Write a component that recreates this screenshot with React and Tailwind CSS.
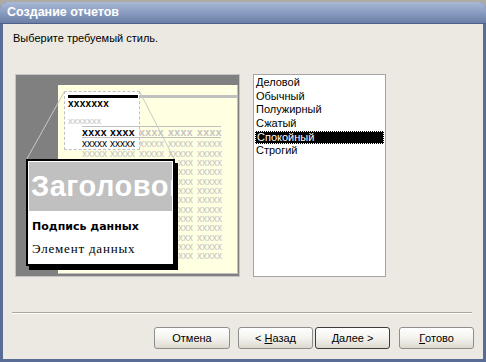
const styles = ['Деловой', 'Обычный', 'Полужирный', 'Сжатый', 'Спокойный', 'Строгий']

const groupX = ['left-[66px]', 'left-[94px]', 'left-[123px]', 'left-[152px]', 'left-[181px]']
const rowTop = [
  'top-[64px]', 'top-[74px]', 'top-[83px]', 'top-[92px]', 'top-[102px]', 'top-[111px]', 'top-[120px]',
  'top-[130px]', 'top-[139px]', 'top-[148px]', 'top-[158px]', 'top-[167px]', 'top-[176px]',
]

function DataRow({ top, index }) {
  // rows from the third on run behind the callout: only what shows to its right is drawn
  if (index >= 2) {
    return (
      <>
        <div className={`absolute ${top} left-[162px] w-[15px] overflow-hidden text-[10px] leading-[9px] text-[#c4c4c4]`}>
          <span className="-ml-[10px] block">xxxxx</span>
        </div>
        <div className={`absolute ${top} left-[181px] text-[10px] leading-[9px] text-[#c4c4c4]`}>xxxxx</div>
      </>
    )
  }
  return groupX.map((g, i) => (
    <div
      key={g}
      className={`absolute ${top} ${g} text-[10px] leading-[9px] ${index === 0 && i < 2 ? 'text-black' : 'text-[#c4c4c4]'}`}
    >
      xxxxx
    </div>
  ))
}

function Preview() {
  return (
    <div className="relative h-[203px] w-[225px] border border-[#c4c4c4] bg-[#808080] font-['Liberation_Sans',sans-serif]">
      {/* page */}
      <div className="absolute left-[42px] top-[10px] h-[189px] w-[180px] border-b border-r border-[#c0c0c0] bg-[#ffffe1]" />

      {/* selected header area */}
      <div className="absolute left-[48px] top-[16px] h-[59px] w-[76px] border border-dashed border-[#c0c0c0] bg-white" />
      <div className="absolute left-[52px] top-[20px] h-[3px] w-[70px] bg-black" />
      <div className="absolute left-[123px] top-[20px] h-[3px] w-[99px] bg-[#c0c0c0]" />
      <div className="absolute left-[52px] top-[24px] text-[10px] font-bold leading-[10px] tracking-[0.3px] text-black">xxxxxxx</div>
      <div className="absolute left-[52px] top-[41px] text-[9.5px] leading-[10px] text-[#c4c4c4]">xxxxxxx</div>

      {/* column header */}
      <div className="absolute left-[66px] top-[51px] h-px w-[139px] bg-[#c0c0c0]" />
      <div className="absolute left-[66px] top-[62px] h-px w-[139px] bg-[#c0c0c0]" />
      {groupX.map((g, i) => (
        <div
          key={g}
          className={`absolute top-[52px] ${g} text-[10.5px] font-bold leading-[10px] tracking-[0.4px] ${i < 2 ? 'text-black' : 'text-[#c4c4c4]'}`}
        >
          xxxx
        </div>
      ))}

      {/* data rows */}
      {rowTop.map((t, r) => (
        <DataRow key={t} top={t} index={r} />
      ))}

      {/* zoom lines */}
      <svg className="absolute left-0 top-0" width="223" height="201">
        <line x1="48.5" y1="16.5" x2="10.5" y2="84.5" stroke="#c8c8c8" strokeWidth="1" />
        <line x1="123.5" y1="16.5" x2="158.5" y2="84.5" stroke="#c8c8c8" strokeWidth="1" />
      </svg>

      {/* callout */}
      <div className="absolute left-[10px] top-[84px] h-[107px] w-[149px] border-2 border-black bg-white p-[1px] shadow-[3px_4px_0_#000]">
        <div className="h-[49px] overflow-hidden whitespace-nowrap bg-[#c0c0c0] pl-[2px] text-[29px] font-bold leading-[49px] tracking-[0.5px] text-white">
          Заголовок
        </div>
        <div className="mt-[9px] pl-[3px] font-['DejaVu_Sans',sans-serif] text-[11px] font-bold leading-[14px] text-black">
          Подпись данных
        </div>
        <div className="mt-[8px] pl-[3px] font-['Liberation_Serif',serif] text-[13px] leading-[14px] tracking-[0.8px] text-black">
          Элемент данных
        </div>
      </div>
    </div>
  )
}

function StyleList() {
  return (
    <div className="h-[203px] w-[133px] border border-[#a5a5a5] bg-white pt-px text-[11px] leading-[13.67px] text-black">
      {styles.map((s) => (
        <div
          key={s}
          className={
            s === 'Спокойный'
              ? 'mx-px border border-dotted border-white bg-black pl-[1px] leading-[11.67px] text-white'
              : 'pl-[2px]'
          }
        >
          {s}
        </div>
      ))}
    </div>
  )
}

function Button({ children, isDefault, className = '' }) {
  return (
    <button
      className={`flex h-[22px] w-[75px] items-center justify-center rounded-[3px] border bg-gradient-to-b from-white via-[#f4f3ee] to-[#dcd9cf] text-[11px] text-black ${
        isDefault ? 'border-[#3c3c3c]' : 'border-[#8e8e8e]'
      } ${className}`}
    >
      {children}
    </button>
  )
}

export default function App() {
  return (
    <div className="h-[362px] w-[486px] bg-[#aeaba3] pt-[2px] font-['Liberation_Sans',sans-serif]">
      <div className="flex h-[360px] flex-col rounded-t-[7px] bg-[#586c95] px-[3px] pb-[3px]">
        <div className="-mx-[3px] flex h-[22px] items-center rounded-t-[7px] border-b border-[#4d6189] bg-gradient-to-b from-[#a9b9d7] via-[#8a9cc0] to-[#6a7fa7] pl-[7px] text-[12.5px] font-bold text-white">
          Создание отчетов
        </div>
        <div className="flex flex-1 flex-col bg-[#ece9e2]">
          <p className="ml-[10px] mt-[7px] h-[14px] text-[11px] leading-[14px] text-black">Выберите требуемый стиль.</p>
          <div className="ml-[12px] mt-[29px] flex gap-[13px]">
            <Preview />
            <StyleList />
          </div>
          <div className="ml-[9px] mt-[35px] w-[460px] border-b border-t border-b-white border-t-[#aca899]" />
          <div className="mr-[9px] mt-[13px] flex justify-end">
            <Button className="w-[76px]">Отмена</Button>
            <Button className="ml-[8px]">
              &lt; <span className="ml-[3px] underline">Н</span>азад
            </Button>
            <Button isDefault className="ml-[2px]">
              <span className="underline">Д</span>алее &gt;
            </Button>
            <Button className="ml-[9px]">
              <span className="underline">Г</span>отово
            </Button>
          </div>
        </div>
      </div>
    </div>
  )
}
